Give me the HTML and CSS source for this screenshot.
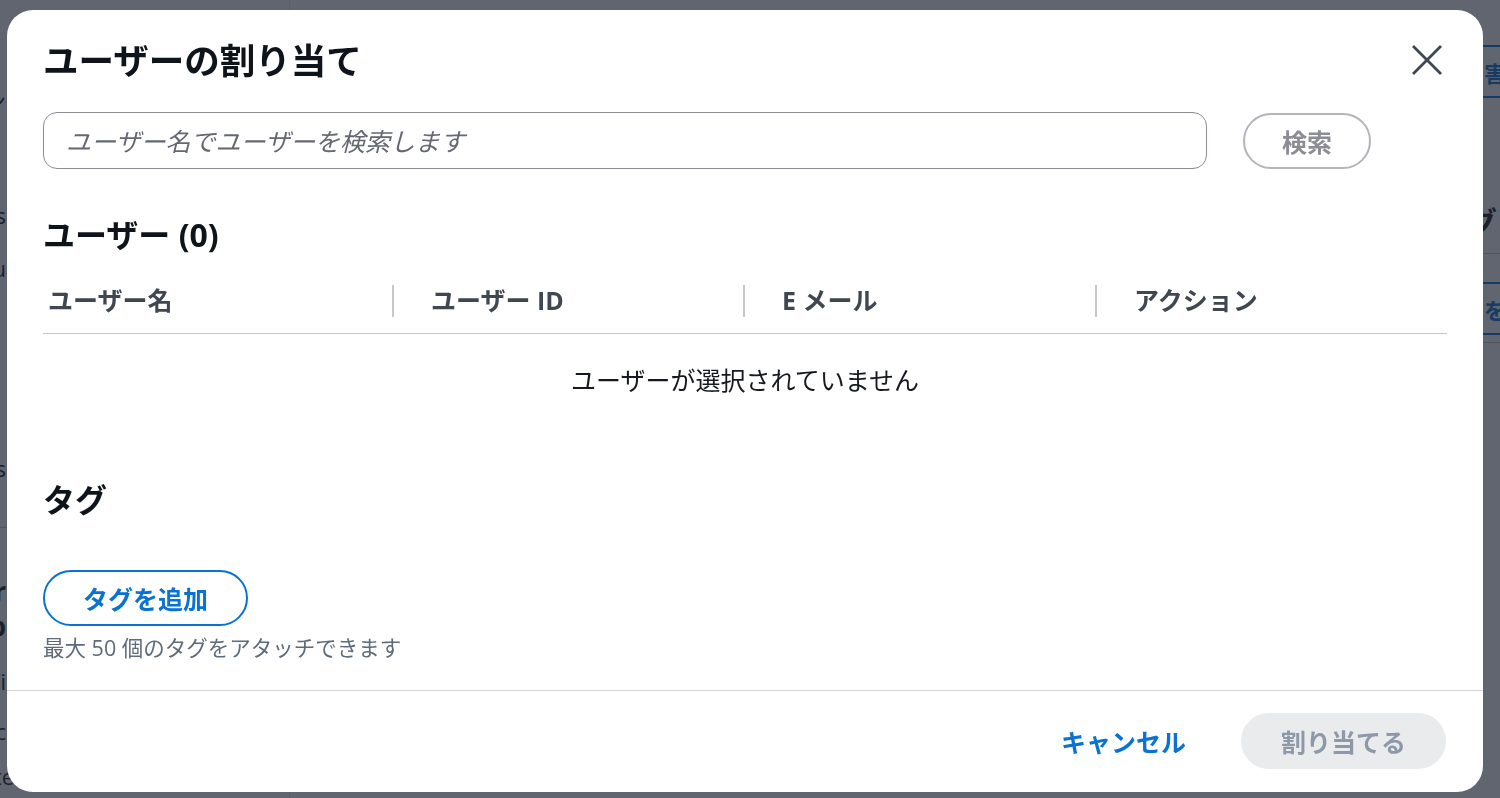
FILE: index.html
```html
<!DOCTYPE html>
<html lang="ja">
<head>
  <meta charset="UTF-8" />
  <meta name="viewport" content="width=device-width, initial-scale=1.0"/>
  <title>ユーザーの割り当て</title>
  <link rel="stylesheet" href="styles.css">
</head>
<body>
  <!-- Page behind the dialog -->
  <div class="page">
    <nav class="sidebar">
      <div class="nav-item i1"><span>ン</span></div>
      <div class="nav-item i2"><span>Logs</span></div>
      <div class="nav-item i3"><span>Menu</span></div>
      <div class="nav-item i4"><span>Repos</span></div>
      <div class="nav-sep"></div>
      <div class="nav-item nav-title"><span>Mor</span></div>
      <div class="nav-item nav-title"><span>Top</span></div>
      <div class="nav-item i5"><span>Wi</span></div>
      <div class="nav-item i6"><span>Doc</span></div>
      <div class="nav-item i7"><span>te</span></div>
    </nav>
    <main class="main">
      <div class="main-content"></div>
      <aside class="side">
        <button class="page-btn">害を報告</button>
        <h3 class="side-title">タグ</h3>
        <div class="side-line"></div>
        <button class="page-btn">を管理</button>
        <div class="side-line"></div>
      </aside>
    </main>
  </div>

  <!-- Assign users dialog -->
  <div class="overlay">
    <div class="modal">
      <div class="modal-body">
        <header class="modal-header">
          <h2>ユーザーの割り当て</h2>
          <button class="close-btn" aria-label="閉じる">
            <svg width="40" height="40" viewBox="0 0 40 40">
              <path d="M6 6 L34 34 M34 6 L6 34" stroke="#414750" stroke-width="2.8" fill="none"/>
            </svg>
          </button>
        </header>

        <div class="search-row">
          <input class="search-input" type="text" placeholder="ユーザー名でユーザーを検索します">
          <button class="btn btn-off">検索</button>
        </div>

        <section class="users">
          <h3>ユーザー (0)</h3>
          <table class="user-table">
            <colgroup>
              <col class="c1"><col class="c2"><col class="c3"><col>
            </colgroup>
            <thead>
              <tr>
                <th>ユーザー名</th>
                <th>ユーザー ID</th>
                <th>E メール</th>
                <th>アクション</th>
              </tr>
            </thead>
            <tbody>
              <tr>
                <td colspan="4" class="empty">ユーザーが選択されていません</td>
              </tr>
            </tbody>
          </table>
        </section>

        <section class="tags">
          <h3>タグ</h3>
          <button class="btn btn-normal">タグを追加</button>
          <p class="hint">最大 50 個のタグをアタッチできます</p>
        </section>
      </div>

      <footer class="modal-footer">
        <button class="btn btn-link">キャンセル</button>
        <button class="btn btn-primary-off">割り当てる</button>
      </footer>
    </div>
  </div>
</body>
</html>
```

FILE: styles.css
```css
body {
  margin: 0;
  font-family: "Open Sans", "Noto Sans CJK JP", sans-serif;
  background: #ffffff;
  color: #16191f;
  overflow: hidden;
}

/* ---- page under the overlay ---- */
.page {
  display: flex;
  width: 1760px;
  height: 798px;
}

.sidebar {
  width: 290px;
  flex-shrink: 0;
  border-right: 1px solid #e9ebed;
  padding-top: 87px;
  font-size: 22px;
  color: #16191f;
  box-sizing: border-box;
}

/* nav labels are right-aligned into a narrow strip at the left edge */
.nav-item {
  display: flex;
  justify-content: flex-end;
  width: 6px;
  white-space: nowrap;
  line-height: 26px;
}

.i2 { margin-top: 89px; }
.i3 { margin-top: 27px; }
.i4 { margin-top: 174px; }
.i5 { margin-top: 24px; }
.i6 { margin-top: 24px; }
.i7 { margin-top: 19px; width: 14px; }

.nav-sep {
  border-top: 1px solid #c6c6cd;
  margin: 46px 0 46px;
}

.nav-title {
  font-weight: 700;
  font-size: 26px;
  line-height: 35px;
}

.main {
  display: grid;
  grid-template-columns: 1137px 300px;
  padding: 45px 0 0 40px;
}

.side {
  display: flex;
  flex-direction: column;
  align-items: flex-start;
}

.page-btn {
  height: 53px;
  padding: 0 15px;
  border: 2px solid #0972d3;
  border-radius: 0;
  background: #fff;
  color: #0972d3;
  font: 700 22px "Noto Sans CJK JP", sans-serif;
}

.side-title {
  margin: 100px 0 0 -30px;
  font-size: 30px;
  line-height: 48px;
}

.side-line {
  width: 100%;
  border-top: 1px solid #c6c6cd;
  margin: 7px 0 28px;
}

/* ---- dialog ---- */
.overlay {
  position: fixed;
  inset: 0;
  background: rgba(30, 36, 50, 0.7);
}

.modal {
  margin: 10px 0 0 7px;
  width: 1476px;
  height: 782px;
  background: #ffffff;
  border-radius: 26px;
  display: flex;
  flex-direction: column;
  overflow: hidden;
}

.modal-body {
  flex: 1;
  padding: 28px 36px 0;
}

.modal-header {
  display: flex;
  align-items: center;
  justify-content: space-between;
}

.modal-header h2 {
  margin: 0;
  font-size: 35.5px;
  line-height: 44px;
  font-weight: 700;
  color: #0f141a;
}

.close-btn {
  width: 40px;
  height: 40px;
  padding: 0;
  border: none;
  background: none;
  cursor: pointer;
}

.close-btn svg {
  display: block;
}

.search-row {
  display: flex;
  align-items: center;
  gap: 36px;
  margin-top: 30px;
  padding-right: 76px;
}

.search-input {
  flex: 1;
  height: 57px;
  box-sizing: border-box;
  border: 1px solid #8c8c94;
  border-radius: 14px;
  padding: 0 22px;
  font: 25px "Open Sans", "Noto Sans CJK JP", sans-serif;
}

.search-input::placeholder {
  color: #656871;
  font-style: italic;
}

.btn {
  height: 56px;
  box-sizing: border-box;
  border: 2px solid transparent;
  border-radius: 28px;
  padding: 0 38px;
  background: none;
  font: 700 25px "Open Sans", "Noto Sans CJK JP", sans-serif;
  cursor: pointer;
}

.btn-off {
  width: 128px;
  padding: 0;
  border-color: #b4b4bb;
  color: #8c8c94;
}

.btn-normal {
  border-color: #0972d3;
  color: #0972d3;
}

.btn-link {
  color: #0972d3;
}

.btn-primary-off {
  background: #e9ebed;
  border-color: #e9ebed;
  color: #8d99a8;
}

.users h3,
.tags h3 {
  margin: 0;
  font-size: 32px;
  line-height: 40px;
  font-weight: 700;
  color: #0f141a;
}

.users {
  margin-top: 46px;
}

.user-table {
  width: 100%;
  margin-top: 12px;
  border-collapse: collapse;
  table-layout: fixed;
}

.user-table .c1 { width: 349px; }
.user-table .c2 { width: 351px; }
.user-table .c3 { width: 352px; }

.user-table th {
  position: relative;
  text-align: left;
  padding: 16px 0 16px 39px;
  font-size: 25px;
  line-height: 34px;
  font-weight: 700;
  color: #414750;
  border-bottom: 1px solid #c6c6cd;
}

.user-table th:first-child {
  padding-left: 5px;
}

/* column resizer mark */
.user-table th + th::before {
  content: "";
  position: absolute;
  left: 0;
  top: 18px;
  width: 2px;
  height: 32px;
  background: #c6c6cd;
}

.user-table td.empty {
  text-align: center;
  padding: 29px 0 24px;
  font-size: 25px;
  line-height: 34px;
  color: #16191f;
}

.tags {
  margin-top: 59px;
}

.tags .btn-normal {
  margin-top: 50px;
  display: block;
}

.hint {
  margin: 8px 0 0;
  font-size: 21.5px;
  line-height: 28px;
  color: #5f6b7a;
}

.modal-footer {
  border-top: 1px solid #d1d5db;
  display: flex;
  justify-content: flex-end;
  gap: 15px;
  padding: 22px 37px 23px;
}
```
